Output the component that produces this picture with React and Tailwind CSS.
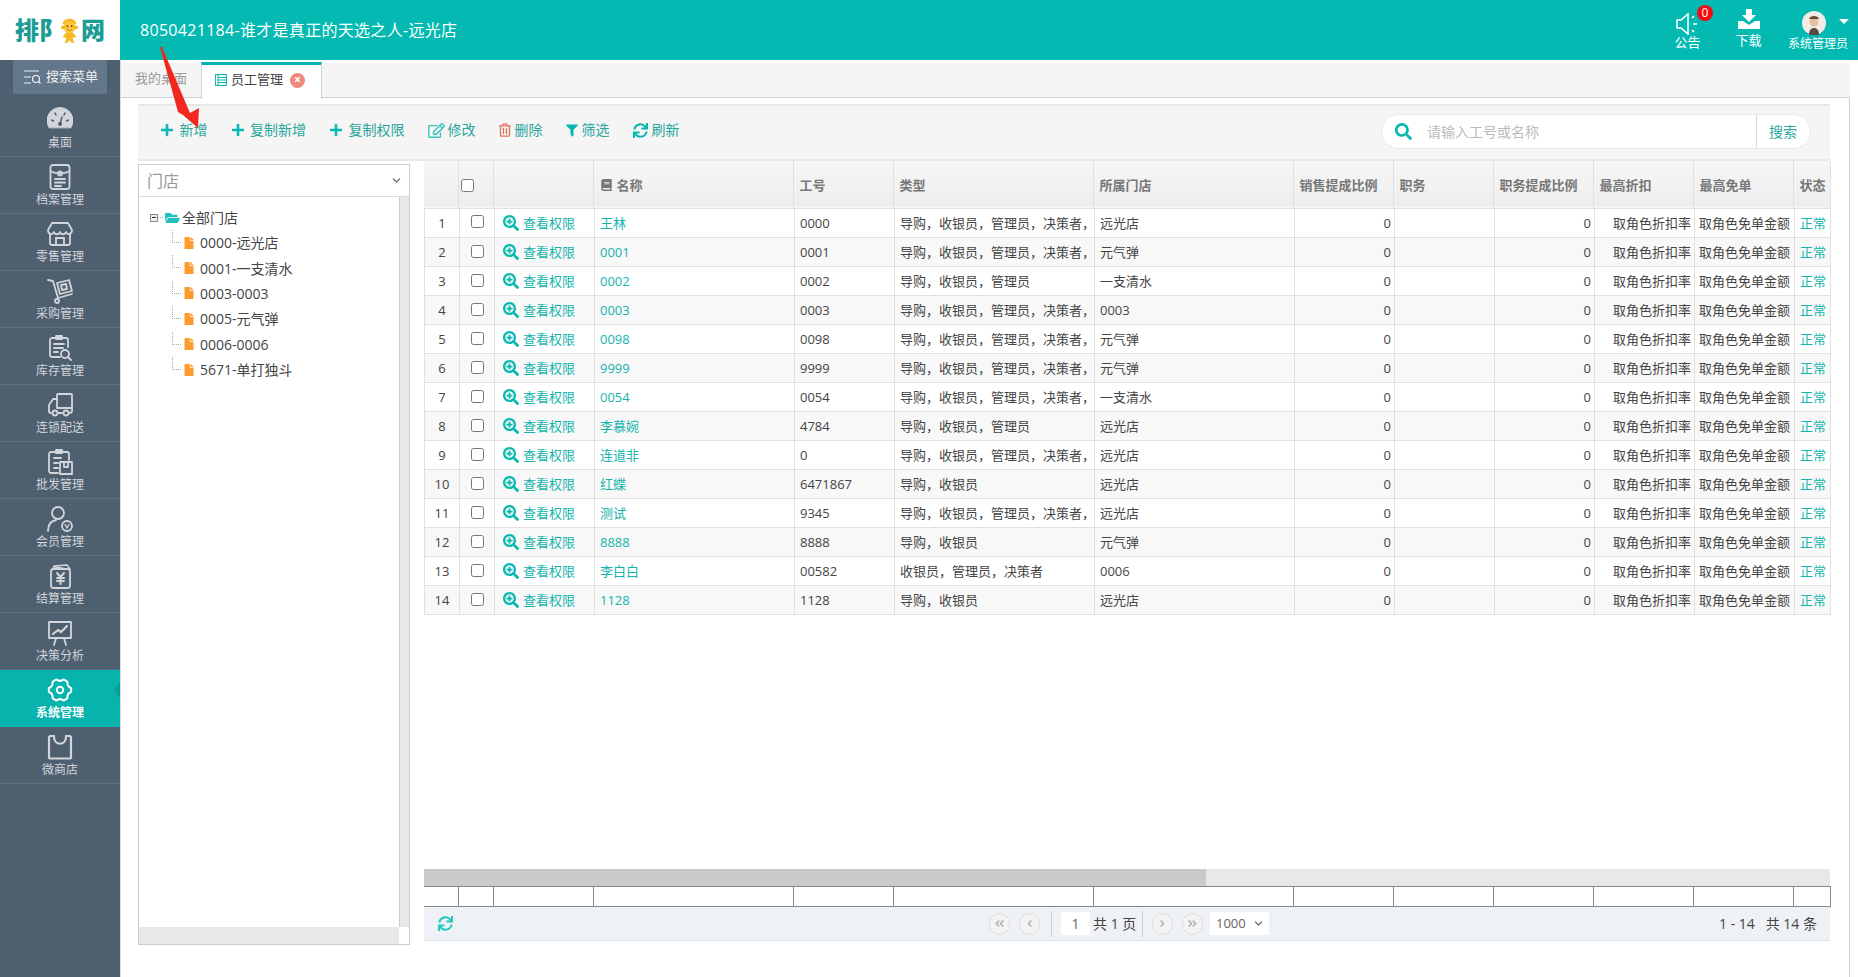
import {
  FaPlus, FaRegEdit, FaRegTrashAlt, FaFilter, FaSync, FaSearch, FaSearchPlus, FaBook,
  FaAngleDoubleLeft, FaAngleLeft, FaAngleRight, FaAngleDoubleRight, FaFolderOpen, FaFile, FaChevronDown,
} from 'react-icons/fa'

const fontClass = "font-['Open_Sans','Noto_Sans_CJK_SC',sans-serif]"

const ICON_STROKE = 'currentColor'

function Ico({ children }) {
  return (
    <svg viewBox="0 0 26 26" fill="none" stroke={ICON_STROKE} strokeWidth="1.8" strokeLinecap="round" strokeLinejoin="round" className="h-[26px] w-[26px]">
      {children}
    </svg>
  )
}

const menus = [
  {
    label: '桌面',
    icon: (
      <Ico>
        <path d="M2 20.500A13 13 0 1 1 24 20.500z" fill="currentColor" stroke="currentColor" strokeWidth="1" />
        <path d="M13 17l2-7M4.500 13l2 1M21.500 13l-2 1M8 6l1 2M18 6l-1 2" stroke="#4e5f70" strokeWidth="1.500" />
        <circle cx="13" cy="17" r="2" fill="#4e5f70" stroke="none" />
      </Ico>
    ),
  },
  {
    label: '档案管理',
    icon: (
      <Ico>
        <rect x="3.500" y="1" width="19" height="24" rx="2.500" />
        <path d="M3.500 7c4 3 15 3 19 0M8 15h10M8 18.500h10M8 22h6" />
        <circle cx="13" cy="9.500" r="2" />
      </Ico>
    ),
  },
  {
    label: '零售管理',
    icon: (
      <Ico>
        <path d="M5 2h16l4 7c0 5-5 5-6 2-1 3-5 3-6 0-1 3-5 3-6 0-1 3-6 3-6-2z" />
        <path d="M3 13v9a2 2 0 0 0 2 2h16a2 2 0 0 0 2-2v-9M9 24v-7h8v7" />
      </Ico>
    ),
  },
  {
    label: '采购管理',
    icon: (
      <Ico>
        <path d="M1 2l5 1 5 17 14-4" />
        <circle cx="10" cy="23" r="2" />
        <path d="M10 5l12-3 3 11-12 3z" />
        <path d="M14 7l5-1 1 5-5 1z" />
      </Ico>
    ),
  },
  {
    label: '库存管理',
    icon: (
      <Ico>
        <path d="M13 22H5a2 2 0 0 1-2-2V5a2 2 0 0 1 2-2h14a2 2 0 0 1 2 2v7" />
        <path d="M9 1h6v3H9zM7 9h10M7 13h9M7 17h4" />
        <circle cx="18" cy="19" r="4" />
        <path d="M21 22l3 3" />
      </Ico>
    ),
  },
  {
    label: '连锁配送',
    icon: (
      <Ico>
        <path d="M10 15V3a1 1 0 0 1 1-1h13a1 1 0 0 1 1 1v13H10" />
        <path d="M10 7H6l-4 6v6c0 1 .5 2 2 2M11 21h4M22 21c1.500 0 3-.5 3-2v-3" />
        <circle cx="8" cy="21" r="2.500" />
        <circle cx="19" cy="21" r="2.500" />
      </Ico>
    ),
  },
  {
    label: '批发管理',
    icon: (
      <Ico>
        <path d="M11 24H4a2 2 0 0 1-2-2V5a2 2 0 0 1 2-2h16a2 2 0 0 1 2 2v6" />
        <path d="M9 1h6v3H9zM7 9h7M7 14h4M7 19h4" />
        <path d="M13 13h12v12H13z" />
        <path d="M17 13v5h4v-5" />
      </Ico>
    ),
  },
  {
    label: '会员管理',
    icon: (
      <Ico>
        <circle cx="11" cy="7" r="6" />
        <path d="M1 25c0-6 3-10 8-11" />
        <circle cx="20" cy="20" r="5" />
        <path d="M18 18.500l2 3.500 2-3.500" strokeWidth="1.400" />
      </Ico>
    ),
  },
  {
    label: '结算管理',
    icon: (
      <Ico>
        <rect x="4" y="6" width="19" height="19" rx="2.500" />
        <path d="M6 6l1-3 13-1 3 4M8 4l12 2" strokeWidth="1.400" />
        <path d="M10 10l3.500 4 3.500-4M13.500 14v7M10 15h7M10 18h7" strokeWidth="2" />
      </Ico>
    ),
  },
  {
    label: '决策分析',
    icon: (
      <Ico>
        <path d="M2 2h22v16H2z" />
        <path d="M6 14l5-4 3 2 6-6" strokeWidth="2.200" />
        <path d="M9 18l-2 7M17 18l2 7" />
      </Ico>
    ),
  },
  {
    label: '系统管理',
    active: true,
    icon: (
      <Ico>
        <path d="M9.500 2.500c2 1.600 5 1.600 7 0 1.600.6 3 1.400 4 2.500-.4 2.500 1 5 3.500 6 .4 1.300.4 2.700 0 4-2.500 1-3.900 3.500-3.500 6-1 1.100-2.400 1.900-4 2.500-2-1.600-5-1.600-7 0-1.600-.6-3-1.400-4-2.500.4-2.500-1-5-3.500-6-.4-1.300-.4-2.700 0-4 2.500-1 3.900-3.500 3.500-6 1-1.100 2.400-1.900 4-2.500z" strokeWidth="2" />
        <circle cx="13" cy="13" r="3.200" strokeWidth="2" />
      </Ico>
    ),
  },
  {
    label: '微商店',
    icon: (
      <Ico>
        <path d="M7 2H3.500A1.500 1.500 0 0 0 2 3.500V23a1.500 1.500 0 0 0 1.500 1.500h19A1.500 1.500 0 0 0 24 23V3.500A1.500 1.500 0 0 0 22.500 2H19" strokeWidth="2.200" />
        <path d="M7 3c0 9 12 9 12 0" strokeWidth="2.200" />
      </Ico>
    ),
  },
]

const stores = ['0000-远光店', '0001-一支清水', '0003-0003', '0005-元气弹', '0006-0006', '5671-单打独斗']

const FULL = '导购，收银员，管理员，决策者，'
const rows = [
  ['王林', '0000', FULL, '远光店'],
  ['0001', '0001', FULL, '元气弹'],
  ['0002', '0002', '导购，收银员，管理员', '一支清水'],
  ['0003', '0003', FULL, '0003'],
  ['0098', '0098', FULL, '元气弹'],
  ['9999', '9999', FULL, '元气弹'],
  ['0054', '0054', FULL, '一支清水'],
  ['李慕婉', '4784', '导购，收银员，管理员', '远光店'],
  ['连道非', '0', FULL, '远光店'],
  ['红蝶', '6471867', '导购，收银员', '远光店'],
  ['测试', '9345', FULL, '远光店'],
  ['8888', '8888', '导购，收银员', '元气弹'],
  ['李白白', '00582', '收银员，管理员，决策者', '0006'],
  ['1128', '1128', '导购，收银员', '远光店'],
]

const headWidths = [34, 35, 100, 200, 100, 200, 200, 100, 100, 100, 100, 100, 37]
const bodyWidths = [35, 35, 100, 200, 100, 200, 200, 100, 100, 100, 100, 100, 36]

function Cols({ widths }) {
  return (
    <colgroup>
      {widths.map((w, i) => (
        <col key={i} style={{ width: w }} />
      ))}
    </colgroup>
  )
}

const toolbar = [
  { gap: 'gap-[5.5px]', icon: <FaPlus className="h-[14px] w-[14px] text-[#05b8b0]" />, label: '新增' },
  { gap: 'gap-[5.5px]', icon: <FaPlus className="h-[14px] w-[14px] text-[#05b8b0]" />, label: '复制新增' },
  { gap: 'gap-[5.5px]', icon: <FaPlus className="h-[14px] w-[14px] text-[#05b8b0]" />, label: '复制权限' },
  { gap: 'gap-[3px]', icon: <FaRegEdit className="h-[15px] w-[17px] text-[#3dc4bd]" />, label: '修改' },
  { gap: 'gap-[4px]', icon: <FaRegTrashAlt className="h-[14px] w-[12px] text-[#e0735f]" />, label: '删除' },
  { gap: 'gap-[4px]', icon: <FaFilter className="h-[13px] w-[12px] text-[#05b8b0]" />, label: '筛选' },
  { gap: 'gap-[4px]', icon: <FaSync className="h-[15px] w-[15px] text-[#05b8b0]" />, label: '刷新' },
]

function Logo() {
  return (
    <div className="flex h-[60px] w-[120px] items-center justify-center bg-white text-[24px] leading-none font-black text-[#1b9c96]">
      <span>排</span>
      <span>阝</span>
      <svg viewBox="0 0 24 30" className="-ml-[4px] h-[26px] w-[21px]">
        <path d="M4 8c1-8 15-8 16 0z" fill="#f5b81f" />
        <circle cx="12" cy="11.500" r="7" fill="#f8c93a" />
        <circle cx="4.500" cy="12" r="2.200" fill="#f5b81f" />
        <circle cx="19.500" cy="12" r="2.200" fill="#f5b81f" />
        <circle cx="9.500" cy="10.500" r="1.100" fill="#5b3a10" />
        <circle cx="14.500" cy="10.500" r="1.100" fill="#5b3a10" />
        <path d="M9 14c2 2 4 2 6 0" stroke="#c5651a" fill="none" />
        <path d="M8 18h8l4 5-3 1-1-1v4l2 3h-3l-3-3-3 3H6l2-3v-4l-1 1-3-1z" fill="#f5b81f" />
      </svg>
      <span className="ml-[1px]">网</span>
    </div>
  )
}

function PagerBtn({ children }) {
  return (
    <span className="flex h-[22px] w-[21px] items-center justify-center rounded-full border border-[#dddddd] bg-[#f3f3f3] text-[#b5b5b5]">
      {children}
    </span>
  )
}

export default function App() {
  return (
    <div className={`relative flex h-[977px] w-[1858px] flex-col overflow-hidden bg-white text-[13px] text-[#444] ${fontClass}`}>
      <header className="flex h-[60px] shrink-0 bg-[#03b9b1] text-white">
        <Logo />
        <div className="flex-1 pt-[21px] pl-[20px] text-[16px] leading-[19px] tracking-[0.3px]">8050421184-谁才是真正的天选之人-远光店</div>
        <div className="relative w-[45px] pt-[13px] text-center text-[13px]">
          <svg viewBox="0 0 24 22" fill="none" stroke="white" strokeWidth="1.600" className="ml-[11px] h-[22px] w-[24px]">
            <path d="M1 7h4l7-6v20l-7-6H1zM16 5l2-2M17 11h4M16 17l2 2" />
          </svg>
          <span className="absolute top-[5px] left-[32px] flex h-[16px] w-[16px] items-center justify-center rounded-full bg-[#f40a12] text-[12px] leading-none">0</span>
          <div className="leading-[15px]">公告</div>
        </div>
        <div className="ml-[16px] w-[45px] pt-[9px] text-center text-[13px]">
          <svg viewBox="0 0 22 20" fill="white" className="mx-auto h-[20px] w-[22px]">
            <path d="M8 0h6v6h4l-7 7-7-7h4z" />
            <path d="M0 12h5l6 4 6-4h5v8H0z" />
          </svg>
          <div className="mt-[4px] leading-[15px]">下载</div>
        </div>
        <div className="relative ml-[19px] w-[68px] pt-[11px] pr-[20px] text-center text-[12px]">
          <svg viewBox="0 0 24 24" className="mx-auto h-[24px] w-[24px]">
            <circle cx="12" cy="12" r="12" fill="#f1ece8" />
            <path d="M7 24c0-5 2-7 5-7s5 2 5 7z" fill="#5a4a45" />
            <circle cx="12" cy="11" r="4.500" fill="#e6bfa0" />
            <path d="M7 8c1-4 9-4 10 0z" fill="#6d4a35" />
          </svg>
          <span className="absolute top-[19px] right-[9px] h-0 w-0 border-x-[5px] border-t-[5px] border-x-transparent border-t-white" />
          <div className="absolute top-[36px] right-[10px] leading-[15px] whitespace-nowrap">系统管理员</div>
        </div>
      </header>

      <div className="flex min-h-0 flex-1">
        <aside className="flex w-[121px] shrink-0 flex-col border-r border-[#d5dade] bg-[#4e5f70] text-[12px] text-[#d2d6da]">
          <div className="h-[40px] px-[13px]">
            <div className="flex h-[34px] items-center gap-[5px] bg-[#63778a] pl-[10px] text-[13px] text-[#eef0f2]">
              <svg viewBox="0 0 18 14" fill="none" stroke="#eef0f2" strokeWidth="1.200" className="h-[14px] w-[18px]">
                <path d="M1 1h15M1 7h7M1 13h7" />
                <circle cx="13" cy="9" r="3.500" />
                <path d="M15.500 11.500l2 2" />
              </svg>
              搜索菜单
            </div>
          </div>
          {menus.map((m) => (
            <div
              key={m.label}
              className={
                m.active
                  ? 'relative flex h-[57px] flex-col items-center bg-[#06b3ad] pt-[7px] font-bold text-white'
                  : 'flex h-[57px] flex-col items-center border-b border-[#5e6f80] pt-[7px]'
              }
            >
              {m.icon}
              <span className="mt-[2px] leading-[16px]">{m.label}</span>
              {m.active ? (
                <span className="absolute top-[12px] right-0 h-0 w-0 border-y-[8px] border-r-[6px] border-y-transparent border-r-[#059c96]" />
              ) : null}
            </div>
          ))}
        </aside>

        <main className="flex min-w-0 flex-1 flex-col pr-[8px]">
          <div className="mt-[3px] flex h-[35px] shrink-0 border-b border-[#c8d0d8] bg-[#f5f5f5]">
            <div className="w-[80px] pt-[6px] pl-[14px] leading-[18px] text-[#999]">我的桌面</div>
            <div className="-mt-[1px] -mb-px flex h-[37px] w-[121px] items-center border-x border-t-[3px] border-x-[#c8d0d8] border-t-[#06b3ad] bg-white pb-[4px] pl-[13px] text-[#444]">
              <svg viewBox="0 0 12 12" fill="none" stroke="#06b3ad" className="mr-[4px] h-[12px] w-[12px]">
                <path d="M.5.5h11v11H.5zM3 .5v11M3 3.500h8.500M3 6h8.500M3 8.500h8.500" />
              </svg>
              员工管理
              <span className="ml-[7px] flex h-[15px] w-[15px] items-center justify-center rounded-full bg-[#ee8a7e] text-[12px] leading-none font-bold text-white">×</span>
            </div>
          </div>

          <div className="flex min-h-0 flex-1 flex-col border-r border-[#c8d0d8] pt-[6px] pr-[19px] pl-[17px]">
            <div className="flex h-[57px] shrink-0 items-start justify-between border-t-2 border-b-2 border-[#e8e8e8] bg-[#f5f5f5] pr-[19px] pl-[22px]">
              <div className="flex items-center gap-[23px] pt-[14px] text-[14px] text-[#2aa5a0]">
                {toolbar.map((t) => (
                  <span key={t.label} className={`flex items-center leading-[20px] ${t.gap}`}>
                    {t.icon}
                    {t.label}
                  </span>
                ))}
              </div>
              <div className="mt-[8px] flex h-[35px] w-[430px] items-center rounded-full border border-[#e4e8ec] bg-white text-[14px]">
                <FaSearch className="ml-[13px] h-[17px] w-[17px] text-[#05b8b0]" />
                <span className="ml-[15px] flex-1 text-[#bbbbbb]">请输入工号或名称</span>
                <span className="flex h-full w-[54px] items-center border-l border-[#d5dade] pl-[12px] text-[#2aa5a0]">搜索</span>
              </div>
            </div>

            <div className="flex min-h-0 gap-[14px]">
              <div className="mt-[3px] flex h-[781px] w-[272px] shrink-0 flex-col border border-[#cccccc]">
                <div className="flex h-[32px] shrink-0 items-center justify-between border-b border-[#dddddd] px-[8px] text-[16px] text-[#999]">
                  门店
                  <FaChevronDown className="h-[9px] w-[9px] text-[#777]" />
                </div>
                <div className="flex min-h-0 flex-1">
                  <div className="flex-1 pt-[8px] pl-[11px] text-[14px]">
                    <div className="flex h-[25px] items-center">
                      <span className="flex h-[8px] w-[8px] items-center justify-center border border-[#888] bg-[#eee]">
                        <span className="h-px w-[4px] bg-[#333]" />
                      </span>
                      <span className="h-0 w-[5px] border-t border-dotted border-[#aaa]" />
                      <FaFolderOpen className="ml-[2px] h-[14px] w-[15px] text-[#26c0ba]" />
                      <span className="ml-[2px]">全部门店</span>
                    </div>
                    {stores.map((s) => (
                      <div key={s} className="flex h-[25.400px] items-center pl-[22px]">
                        <span className="h-[13px] w-[9px] self-start border-b border-l border-dotted border-[#aaa]" />
                        <FaFile className="ml-[3px] h-[12px] w-[10px] text-[#ff9a2e]" />
                        <span className="ml-[6px]">{s}</span>
                      </div>
                    ))}
                  </div>
                  <div className="w-[10px] border-l border-[#cccccc] bg-[#e8e8e8]" />
                </div>
                <div className="flex h-[17px] shrink-0">
                  <div className="flex-1 bg-[#e8e8e8]" />
                  <div className="w-[10px] bg-white" />
                </div>
              </div>

              <div className="flex h-[780px] min-w-0 flex-1 flex-col">
                <table className="w-[1406px] shrink-0 table-fixed border-collapse">
                  <Cols widths={headWidths} />
                  <thead>
                    <tr className="h-[47px] border-b border-[#e0e0e0] bg-gradient-to-b from-[#f6f6f6] to-[#eeeeee] text-left text-[#777] [&>th]:border-r [&>th]:border-[#e0e0e0] [&>th]:pt-[2px] [&>th]:font-bold">
                      <th />
                      <th className="pl-[2px]">
                        <input type="checkbox" className="block" />
                      </th>
                      <th />
                      <th className="pl-[6px]">
                        <span className="flex items-center gap-[4px]">
                          <FaBook className="h-[12px] w-[13px]" />
                          名称
                        </span>
                      </th>
                      <th className="pl-[6px]">工号</th>
                      <th className="pl-[6px]">类型</th>
                      <th className="pl-[6px]">所属门店</th>
                      <th className="pl-[6px]">销售提成比例</th>
                      <th className="pl-[6px]">职务</th>
                      <th className="pl-[6px]">职务提成比例</th>
                      <th className="pl-[6px]">最高折扣</th>
                      <th className="pl-[6px]">最高免单</th>
                      <th className="pl-[6px]">状态</th>
                    </tr>
                  </thead>
                </table>

                <div className="min-h-0 flex-1">
                  <table className="w-[1406px] table-fixed border-collapse">
                    <Cols widths={bodyWidths} />
                    <tbody>
                      {rows.map((r, i) => (
                        <tr key={i} className="h-[29px] border-b border-[#e0e0e0] even:bg-[#f8f8f8] [&>td]:overflow-hidden [&>td]:border-x [&>td]:border-[#e0e0e0] [&>td]:leading-[16px] [&>td]:whitespace-nowrap">
                          <td className="text-center">{i + 1}</td>
                          <td>
                            <input type="checkbox" className="mx-auto -mt-[2px] block" />
                          </td>
                          <td className="pl-[8px] text-[#14b4ad]">
                            <span className="flex items-center gap-[4px]">
                              <FaSearchPlus className="h-[16px] w-[16px] text-[#05b8b0]" />
                              查看权限
                            </span>
                          </td>
                          <td className="pl-[5px] text-[#14b4ad]">{r[0]}</td>
                          <td className="pl-[5px]">{r[1]}</td>
                          <td className="pl-[5px]">{r[2]}</td>
                          <td className="pl-[5px]">{r[3]}</td>
                          <td className="pr-[3px] text-right">0</td>
                          <td />
                          <td className="pr-[3px] text-right">0</td>
                          <td className="pr-[3px] text-right">取角色折扣率</td>
                          <td className="pl-[4px]">取角色免单金额</td>
                          <td className="pl-[5px] text-[#14b4ad]">正常</td>
                        </tr>
                      ))}
                    </tbody>
                  </table>
                </div>

                <div className="h-[17px] shrink-0 bg-[#e8e8e8]">
                  <div className="h-full w-[782px] bg-[#cacaca]" />
                </div>
                <table className="w-[1406px] shrink-0 table-fixed border-collapse">
                  <Cols widths={headWidths} />
                  <tbody>
                    <tr className="h-[20px] border-y border-[#888888] [&>td]:border-r [&>td]:border-[#888888]">
                      {headWidths.map((w, i) => (
                        <td key={i} />
                      ))}
                    </tr>
                  </tbody>
                </table>
                <div className="flex h-[34px] shrink-0 items-center border-b border-[#e0e4e8] bg-[#eef1f5] pr-[13px] pl-[14px] text-[14px]">
                  <FaSync className="h-[15px] w-[15px] text-[#26c9c2]" />
                  <div className="ml-[536px] flex items-center">
                    <PagerBtn><FaAngleDoubleLeft className="h-[11px] w-[11px]" /></PagerBtn>
                    <span className="ml-[9px]"><PagerBtn><FaAngleLeft className="h-[11px] w-[11px]" /></PagerBtn></span>
                    <span className="ml-[11px] h-[26px] w-px bg-[#c8d0d4]" />
                    <span className="ml-[9px] flex h-[23px] w-[29px] items-center justify-center bg-white text-[#666]">1</span>
                    <span className="ml-[3px] w-[43px] whitespace-nowrap">共 1 页</span>
                    <span className="ml-[6px] h-[26px] w-px bg-[#c8d0d4]" />
                    <span className="ml-[9px]"><PagerBtn><FaAngleRight className="h-[11px] w-[11px]" /></PagerBtn></span>
                    <span className="ml-[9px]"><PagerBtn><FaAngleDoubleRight className="h-[11px] w-[11px]" /></PagerBtn></span>
                    <span className="ml-[7px] flex h-[23px] w-[59px] items-center bg-white pl-[6px] text-[13px] text-[#666]">
                      1000
                      <FaChevronDown className="ml-[8px] h-[9px] w-[9px] text-[#777]" />
                    </span>
                  </div>
                  <span className="ml-auto">1 - 14&nbsp;&nbsp;&nbsp;共 14 条</span>
                </div>
              </div>
            </div>
          </div>
        </main>
      </div>

      <svg viewBox="0 0 210 135" className="pointer-events-none absolute top-0 left-0 h-[135px] w-[210px]">
        <polygon points="160,47 162,47 190,113 199,108 198,128 183,115 178,112" fill="#f0281f" />
      </svg>
    </div>
  )
}
